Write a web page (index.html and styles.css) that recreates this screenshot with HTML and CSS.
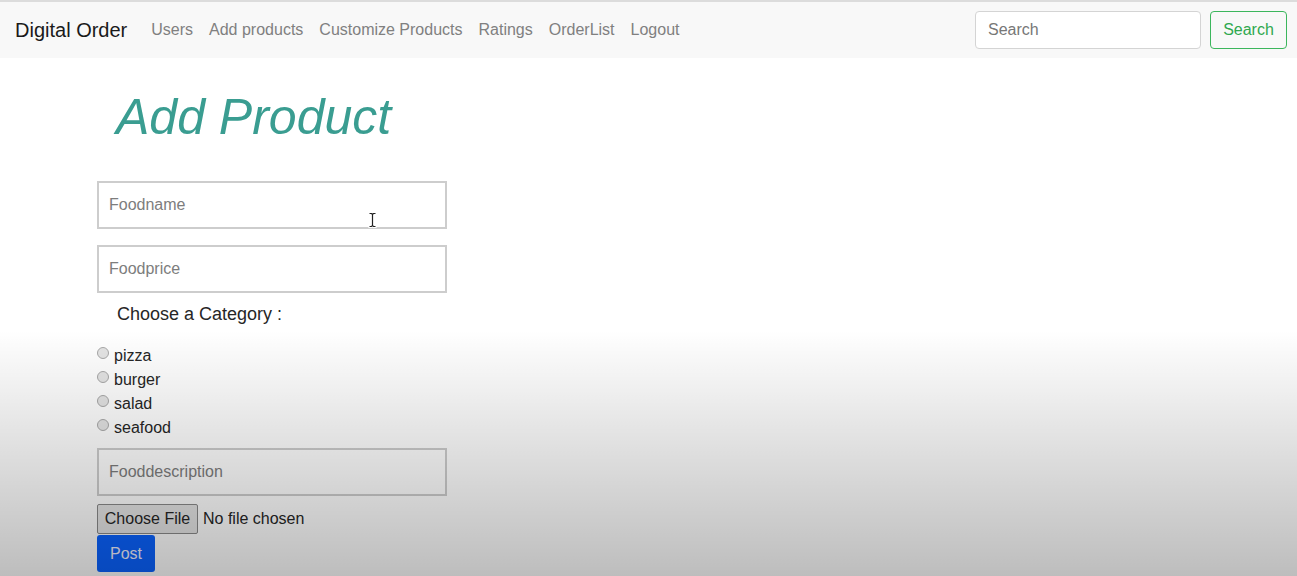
FILE: index.html
```html
<!DOCTYPE html>
<html lang="en">
<head>
<meta charset="utf-8">
<title>Digital Order</title>
<link rel="stylesheet" href="styles.css">
</head>
<body>
<nav class="navbar">
  <a class="brand" href="#">Digital Order</a>
  <ul class="nav-links">
    <li><a href="#">Users</a></li>
    <li><a href="#">Add products</a></li>
    <li><a href="#">Customize Products</a></li>
    <li><a href="#">Ratings</a></li>
    <li><a href="#">OrderList</a></li>
    <li><a href="#">Logout</a></li>
  </ul>
  <form class="search-form">
    <input class="search-input" type="text" placeholder="Search">
    <button class="search-btn" type="button">Search</button>
  </form>
</nav>
<main class="content">
  <h1 class="title">Add Product</h1>
  <form class="product-form">
    <input class="field" type="text" placeholder="Foodname">
    <input class="field" type="text" placeholder="Foodprice">
    <p class="category-label">Choose a Category :</p>
    <div class="radios">
      <label class="radio"><span class="dot"></span>pizza</label>
      <label class="radio"><span class="dot"></span>burger</label>
      <label class="radio"><span class="dot"></span>salad</label>
      <label class="radio"><span class="dot"></span>seafood</label>
    </div>
    <input class="field desc" type="text" placeholder="Fooddescription">
    <div class="file-row">
      <span class="file-btn">Choose File</span>
      <span class="file-text">No file chosen</span>
    </div>
    <button class="post-btn" type="button">Post</button>
  </form>
</main>
<svg class="ibeam" width="9" height="16" viewBox="0 0 9 16" aria-hidden="true">
  <path d="M1.5 1.5h2l1 1 1-1h2M4.5 2.5v11M1.5 14.5h2l1-1 1 1h2" fill="none" stroke="#fff" stroke-width="3" stroke-linecap="round" stroke-linejoin="round"/>
  <path d="M1.5 1.5h2l1 1 1-1h2M4.5 2.5v11M1.5 14.5h2l1-1 1 1h2" fill="none" stroke="#222" stroke-width="1.2"/>
</svg>
<div class="fade"></div>
</body>
</html>
```
FILE: styles.css
```css
* { box-sizing: border-box; }
html, body { margin: 0; padding: 0; }
body {
  font-family: "Liberation Sans", Arial, sans-serif;
  background: #ffffff;
  color: #212529;
  width: 1297px;
  height: 576px;
  overflow: hidden;
  position: relative;
}
.navbar {
  display: flex;
  align-items: center;
  height: 58px;
  padding: 0 10px 0 15px;
  background: #f8f8f8;
  border-top: 2px solid #dcdcdc;
}
.brand {
  font-size: 20px;
  color: #1a1a1a;
  text-decoration: none;
  margin-right: 16px;
}
.nav-links {
  display: flex;
  list-style: none;
  margin: 0;
  padding: 0;
  flex: 1;
}
.nav-links a {
  display: block;
  padding: 8px;
  font-size: 16px;
  color: #808080;
  text-decoration: none;
}
.search-form {
  display: flex;
  align-items: center;
  gap: 9px;
}
.search-input {
  width: 226px;
  height: 38px;
  border: 1px solid #d4d4d4;
  border-radius: 4px;
  padding: 6px 12px;
  font-family: inherit;
  font-size: 16px;
  background: #fff;
}
.search-input::placeholder { color: #777; }
.search-btn {
  height: 38px;
  width: 77px;
  border: 1px solid #3cb65c;
  border-radius: 4px;
  background: transparent;
  color: #2fa84f;
  font-family: inherit;
  font-size: 16px;
}
.content {
  padding-left: 97px;
}
.title {
  margin: 28px 0 0 19px;
  font-size: 50px;
  font-style: italic;
  font-weight: 400;
  line-height: 62px;
  color: #3a9d91;
}
.product-form {
  display: flex;
  flex-direction: column;
  align-items: flex-start;
  margin-top: 33px;
}
.field {
  width: 350px;
  height: 48px;
  border: 2px solid #cdcdcd;
  padding: 0 10px;
  font-family: inherit;
  font-size: 16px;
  background: #fff;
  margin-bottom: 16px;
}
.field::placeholder { color: #7d7d7d; }
.category-label {
  margin: -7px 0 0 20px;
  font-size: 18px;
  line-height: 24px;
  color: #262626;
}
.radios {
  display: flex;
  flex-direction: column;
  margin-top: 18px;
}
.radio {
  display: flex;
  align-items: center;
  height: 24px;
  font-size: 16px;
  color: #262626;
}
.dot {
  width: 12px;
  height: 12px;
  border-radius: 50%;
  border: 1px solid #a8a8a8;
  background: #e4e4e4;
  margin: -6px 5px 0 0;
}
.desc {
  margin-top: 8px;
  margin-bottom: 8px;
}
.file-row {
  display: flex;
  align-items: center;
  font-size: 16px;
  color: #262626;
}
.file-btn {
  display: inline-flex;
  align-items: center;
  height: 30px;
  width: 101px;
  justify-content: center;
  border: 1px solid #8a8a8a;
  background: #e6e6e6;
  border-radius: 2px;
  margin-right: 5px;
}
.post-btn {
  margin-top: 1px;
  width: 58px;
  height: 37px;
  border: none;
  border-radius: 3px;
  background: #0a62ff;
  color: #f0f0ff;
  font-family: inherit;
  font-size: 16px;
}
.ibeam {
  position: absolute;
  left: 368px;
  top: 212px;
  pointer-events: none;
}
.fade {
  position: absolute;
  left: 0;
  right: 0;
  top: 330px;
  bottom: 0;
  pointer-events: none;
  background: linear-gradient(to bottom, rgba(0,0,0,0) 0%, rgba(0,0,0,0.26) 100%);
}
```
